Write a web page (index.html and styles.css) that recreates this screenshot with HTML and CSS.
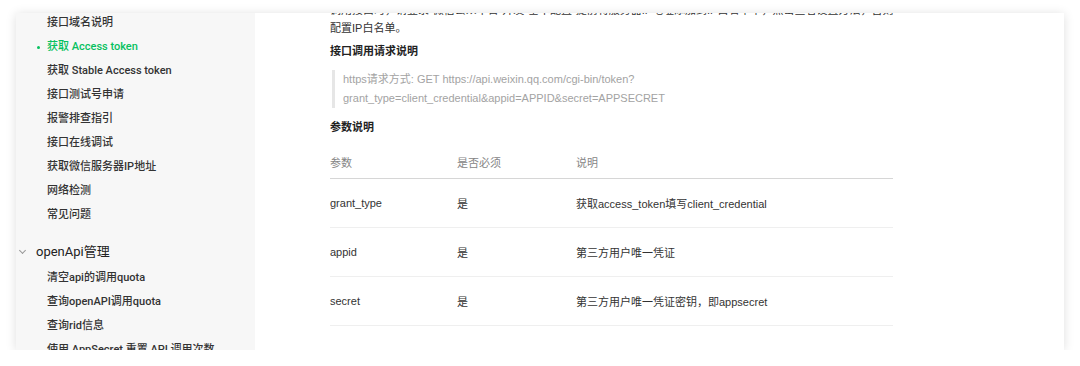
FILE: index.html
```html
<!DOCTYPE html>
<html>
  <head lang="zh-CN">
    <meta charset="UTF-8" />
    <title>获取 Access token</title>
    <link rel="stylesheet" href="styles.css">
  </head>

  <body>
    <div class="window">
      <div class="side">
        <ul class="menu first">
          <li>接口域名说明</li>
          <li class="active">获取 Access token</li>
          <li>获取 Stable Access token</li>
          <li>接口测试号申请</li>
          <li>报警排查指引</li>
          <li>接口在线调试</li>
          <li>获取微信服务器IP地址</li>
          <li>网络检测</li>
          <li>常见问题</li>
        </ul>
        <div class="group">
          <span class="arrow"></span>
          openApi管理
        </div>
        <ul class="menu">
          <li>清空api的调用quota</li>
          <li>查询openAPI调用quota</li>
          <li>查询rid信息</li>
          <li>使用 AppSecret 重置 API 调用次数</li>
        </ul>
      </div>

      <div class="main">
        <p class="intro">调用接口时，请登录“微信公众平台-开发-基本配置”提前将服务器IP地址添加到IP白名单中，点击查看设置方法，否则将无法调用成功。小程序无需<br>配置IP白名单。</p>

        <h4>接口调用请求说明</h4>
        <blockquote>
          https请求方式: GET https://api.weixin.qq.com/cgi-bin/token?<br>grant_type=client_credential&amp;appid=APPID&amp;secret=APPSECRET
        </blockquote>

        <h4 class="params">参数说明</h4>
        <div class="table">
          <div class="row head">
            <span>参数</span>
            <span>是否必须</span>
            <span>说明</span>
          </div>
          <div class="row">
            <span>grant_type</span>
            <span>是</span>
            <span>获取access_token填写client_credential</span>
          </div>
          <div class="row">
            <span>appid</span>
            <span>是</span>
            <span>第三方用户唯一凭证</span>
          </div>
          <div class="row">
            <span>secret</span>
            <span>是</span>
            <span>第三方用户唯一凭证密钥，即appsecret</span>
          </div>
        </div>
      </div>
    </div>
  </body>
</html>
```

FILE: styles.css
```css
* {
  box-sizing: border-box;
}

body {
  margin: 0;
  padding: 0;
  background: #fff;
  font-family: "Liberation Sans", "Noto Sans CJK SC", sans-serif;
  font-size: 11px;
  color: #333;
}

.window {
  margin: 13px 16px 0;
  width: 1048px;
  height: 337px;
  display: flex;
  overflow: hidden;
  background: #fff;
  box-shadow: 0 1px 10px rgba(0, 0, 0, 0.13);
}

/* 左侧菜单 */
.side {
  width: 239px;
  flex-shrink: 0;
  background: #f7f7f7;
  font-family: Roboto, "Noto Sans CJK SC", sans-serif;
}

.menu {
  list-style: none;
  margin: 2px 0 0;
  padding: 0 0 0 31px;
}

.menu.first {
  margin-top: -2px;
}

.menu li {
  height: 24px;
  line-height: 24px;
  font-weight: 500;
  color: #333;
  white-space: nowrap;
}

.menu li.active {
  color: #07c160;
}

.menu li.active::before {
  content: "";
  display: inline-block;
  width: 3px;
  height: 3px;
  border-radius: 50%;
  background: #07c160;
  margin: 0 7px 0 -10px;
  vertical-align: middle;
}

.group {
  margin-top: 13px;
  height: 24px;
  line-height: 24px;
  padding-left: 4px;
  display: flex;
  align-items: center;
  font-size: 13px;
  color: #222;
}

.arrow {
  width: 5px;
  height: 5px;
  border-right: 1px solid #999;
  border-bottom: 1px solid #999;
  transform: rotate(45deg);
  margin: -3px 11px 0 0;
}

/* 正文 */
.main {
  flex: 1;
  padding-left: 75px;
}

.intro {
  margin: -12px 0 0;
  width: 563px;
  line-height: 18px;
  white-space: nowrap;
  overflow: hidden;
}

h4 {
  margin: 5px 0 0;
  line-height: 18px;
  font-size: 11px;
  font-weight: 700;
  color: #222;
}

h4.params {
  margin-top: 10px;
}

blockquote {
  margin: 10px 0 0 2px;
  padding-left: 8px;
  border-left: 3px solid #e6e6e6;
  line-height: 19px;
  color: #a3a3a3;
}

.table {
  margin-top: 10px;
  width: 563px;
}

.row {
  display: grid;
  grid-template-columns: 127px 119px 1fr;
  align-items: center;
  height: 49px;
  border-bottom: 1px solid #efefef;
  color: #333;
}

.row.head {
  height: 33px;
  border-bottom-color: #d6d6d6;
  color: #858585;
}
```
